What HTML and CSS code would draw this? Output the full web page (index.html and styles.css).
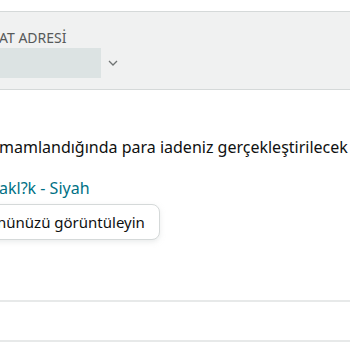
FILE: index.html
```html
<!DOCTYPE html>
<html lang="tr">

<head>
    <meta charset="UTF-8">
    <meta name="viewport" content="width=device-width, initial-scale=1.0">
    <title>İade</title>
    <link rel="stylesheet" href="styles.css">
</head>

<body>
    <div class="page">
        <div class="address-panel">
            <div class="address-label">AT ADRESİ</div>
            <div class="address-row">
                <div class="address-select"></div>
                <svg class="chevron" width="10" height="6" viewBox="0 0 10 6">
                    <path d="M1 1 L5 5 L9 1" fill="none" stroke="#6f7373" stroke-width="1.3"/>
                </svg>
            </div>
        </div>

        <div class="refund">
            <p class="refund_text">mamlandığında para iadeniz gerçekleştirilecek</p>
            <a class="refund_link" href="#">akl?k - Siyah</a>
            <div class="refund_actions">
                <button class="btn">nünüzü görüntüleyin</button>
            </div>
        </div>

        <div class="rule rule_first"></div>
        <div class="rule rule_second"></div>
    </div>
</body>

</html>
```

FILE: styles.css
```css
/* temel ayarlar */
body {
    font-family: "Noto Sans", Arial, sans-serif;
    margin: 0;
    padding: 0;
    background: #fff;
    color: #0f1111;
}

.page {
    width: 350px;
    height: 350px;
    overflow: hidden;
}

.address-panel {
    margin-top: 11px;
    height: 60px;
    border-top: 1px solid #d5d9d9;
    border-bottom: 1px solid #d5d9d9;
    background-color: #f0f1f1;
    padding-top: 17px;
}

.address-label {
    font-size: 14px;
    line-height: 18px;
    color: #565959;
    margin-left: -1px;
    white-space: nowrap;
}

.address-row {
    display: flex;
    align-items: center;
    gap: 7px;
    margin-top: 1px;
}

.address-select {
    width: 101px;
    height: 30px;
    background-color: #dce3e3;
}

.chevron {
    display: block;
}

.refund {
    padding-top: 47px;
}

.refund_text {
    margin: 0;
    font-size: 16px;
    line-height: 20px;
    white-space: nowrap;
    margin-left: -1px;
}

.refund_link {
    display: block;
    margin-top: 21px;
    font-size: 16px;
    line-height: 20px;
    color: #007185;
    text-decoration: none;
    margin-left: -1px;
}

.refund_actions {
    margin-top: 6px;
}

.btn {
    font-family: inherit;
    font-size: 15px;
    color: #0f1111;
    background: #fff;
    border: 1px solid #d5d9d9;
    border-radius: 8px;
    box-shadow: 0 2px 5px rgba(213, 217, 217, 0.5);
    height: 36px;
    padding: 0 14px 0 16px;
    margin-left: -20px;
    display: block;
}

.rule {
    height: 2px;
    background-color: #e7e9e9;
}

.rule_first {
    margin-top: 60px;
}

.rule_second {
    margin-top: 38px;
}
```
